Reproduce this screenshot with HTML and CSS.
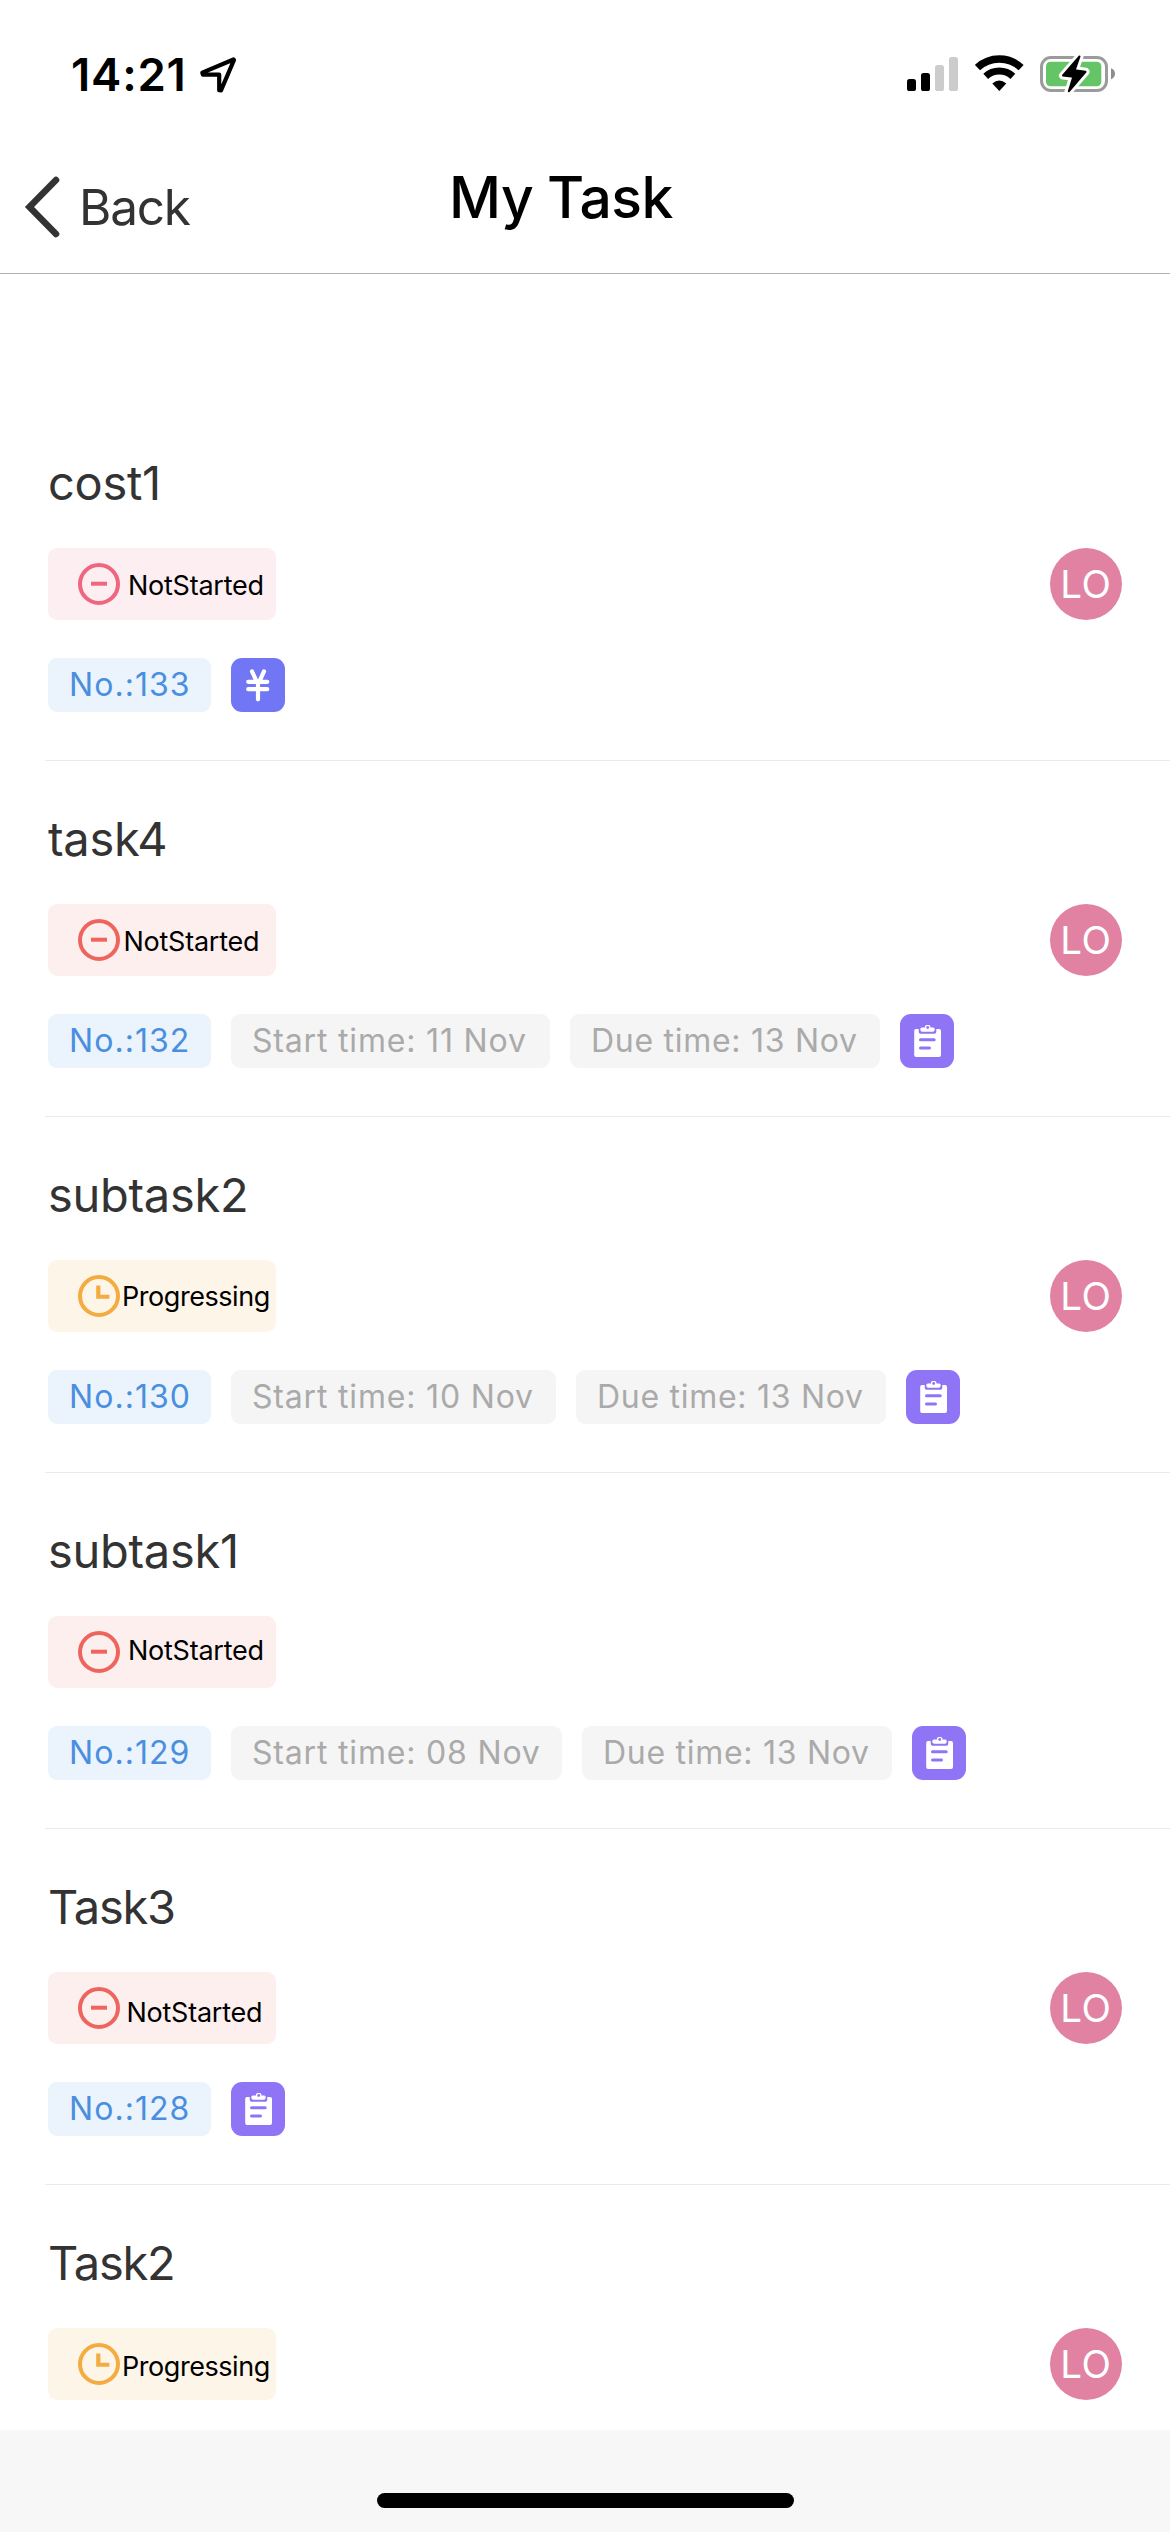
FILE: index.html
```html
<!DOCTYPE html>
<html lang="en">
<head>
<meta charset="utf-8">
<title>My Task</title>
<link rel="stylesheet" href="styles.css">
</head>
<body>
<svg class="defs" width="0" height="0" aria-hidden="true">
  <symbol id="minus" viewBox="0 0 42 42">
    <circle cx="21" cy="21" r="19" fill="none" stroke="currentColor" stroke-width="4"/>
    <rect x="13" y="18.7" width="16" height="4" fill="currentColor"/>
  </symbol>
  <symbol id="clock" viewBox="0 0 42 42">
    <circle cx="21" cy="21" r="19" fill="none" stroke="currentColor" stroke-width="4"/>
    <path d="M18.2 10.5h4.2v9.2h9v4H18.2z" fill="currentColor"/>
  </symbol>
  <symbol id="clipboard" viewBox="0 0 54 54">
    <path d="M16 15H18.7V17.2Q18.7 19.8 21.3 19.8H33.7Q36.3 19.8 36.3 17.2V15H39Q41 15 41 17V41Q41 43 39 43H16Q14.2 43 14.2 41V17Q14.2 15 16 15Z" fill="#fff"/>
    <path d="M22 13.4H25V12.6Q25 11 26.6 11H28.8Q30.4 11 30.4 12.6V13.4H33.2Q34.7 13.4 34.7 14.9V15.5Q34.7 17.8 32.7 17.8H22.4Q20.3 17.8 20.3 15.5V14.9Q20.3 13.4 22 13.4Z" fill="#fff"/>
    <circle cx="27.7" cy="13.5" r="1.4" fill="#8f75f6"/>
    <path d="M20.5 25.8H34.2M20.5 34H29.5" stroke="#8f75f6" stroke-width="3" stroke-linecap="round"/>
  </symbol>
  <symbol id="yen" viewBox="0 0 54 54">
    <path d="M21 13.4L25.8 23.8M33 13.4L28.2 23.8M27 24V41.3M17.2 23.8H36.3M17.2 31.2H36.3" fill="none" stroke="#fff" stroke-width="4.2" stroke-linecap="round"/>
  </symbol>
</svg>

<div class="screen">
  <div class="status-bar">
    <span class="time">14:21</span>
    <svg width="40" height="38" viewBox="0 0 40 38"><path d="M35.5 4.5L4.3 17.6L4.8 19.6H21.2V35.2L23 35.4L36 5Z" fill="none" stroke="#000" stroke-width="4.2" stroke-linejoin="round"/></svg>
    <div class="indicators">
      <svg width="52" height="34" viewBox="0 0 52 34">
        <rect x="0" y="22" width="9" height="12" rx="2.6"/><rect x="14" y="16" width="9" height="18" rx="2.6"/>
        <rect x="28" y="8" width="9" height="26" rx="2.6" fill="#ccc"/><rect x="42" y="0" width="9" height="34" rx="2.6" fill="#ccc"/>
      </svg>
      <svg width="49" height="38" viewBox="0 0 49 38">
        <path d="M2.5 12.6A32 32 0 0 1 46.1 12.6" fill="none" stroke="#000" stroke-width="7.4"/>
        <path d="M10.7 21.4A20 20 0 0 1 37.9 21.4" fill="none" stroke="#000" stroke-width="7"/>
        <path d="M17.3 28.6Q24.3 22.4 31.3 28.6L24.3 36Z"/>
      </svg>
      <svg width="76" height="42" viewBox="0 0 76 42">
        <rect x="1.5" y="4.5" width="65" height="33" rx="9.5" fill="none" stroke="#9b9b9b" stroke-width="3"/>
        <rect x="6" y="8.8" width="55.3" height="24.4" rx="4.5" fill="#65c466"/>
        <path d="M71 15.2Q75 17 75 20.8T71 26.4Z" fill="#8c8c8c"/>
        <path d="M39.5 3.5L23 22.5L33.3 23.8L28.5 38.5L45.5 18.8L34.7 17.2Z" fill="#fff" stroke="#fff" stroke-width="8" stroke-linejoin="round"/>
        <path d="M39.5 3.5L23 22.5L33.3 23.8L28.8 38.3L45.5 18.8L34.7 17.2Z" stroke="#000" stroke-width="2" stroke-linejoin="round"/>
      </svg>
    </div>
  </div>

  <div class="nav">
    <a class="back">
      <svg width="36" height="62" viewBox="0 0 36 62"><path d="M32 4L5.5 31L32 58" fill="none" stroke="#333" stroke-width="6.6" stroke-linecap="round"/></svg>
      <span>Back</span>
    </a>
    <h1 class="title">My Task</h1>
  </div>

  <div class="list">
    <div class="task">
      <div class="name">cost1</div>
      <div class="row">
        <div class="badge rose"><svg class="mark"><use href="#minus"/></svg><span class="label wide">NotStarted</span></div>
        <div class="avatar">LO</div>
      </div>
      <div class="tags"><span class="tag no">No.:133</span><svg class="kind cost"><use href="#yen"/></svg></div>
    </div>
    <div class="task">
      <div class="name">task4</div>
      <div class="row">
        <div class="badge red"><svg class="mark"><use href="#minus"/></svg><span class="label">NotStarted</span></div>
        <div class="avatar">LO</div>
      </div>
      <div class="tags"><span class="tag no">No.:132</span><span class="tag start narrow">Start time: 11 Nov</span><span class="tag due">Due time: 13 Nov</span><svg class="kind"><use href="#clipboard"/></svg></div>
    </div>
    <div class="task">
      <div class="name">subtask2</div>
      <div class="row">
        <div class="badge amber"><svg class="mark"><use href="#clock"/></svg><span class="label busy high">Progressing</span></div>
        <div class="avatar">LO</div>
      </div>
      <div class="tags"><span class="tag no">No.:130</span><span class="tag start">Start time: 10 Nov</span><span class="tag due">Due time: 13 Nov</span><svg class="kind"><use href="#clipboard"/></svg></div>
    </div>
    <div class="task">
      <div class="name">subtask1</div>
      <div class="row">
        <div class="badge red"><svg class="mark"><use href="#minus"/></svg><span class="label wide higher">NotStarted</span></div>
      </div>
      <div class="tags"><span class="tag no">No.:129</span><span class="tag start broad">Start time: 08 Nov</span><span class="tag due">Due time: 13 Nov</span><svg class="kind"><use href="#clipboard"/></svg></div>
    </div>
    <div class="task">
      <div class="name cap">Task3</div>
      <div class="row">
        <div class="badge red"><svg class="mark"><use href="#minus"/></svg><span class="label mid low">NotStarted</span></div>
        <div class="avatar">LO</div>
      </div>
      <div class="tags"><span class="tag no">No.:128</span><svg class="kind"><use href="#clipboard"/></svg></div>
    </div>
    <div class="task">
      <div class="name cap">Task2</div>
      <div class="row">
        <div class="badge amber"><svg class="mark"><use href="#clock"/></svg><span class="label busy">Progressing</span></div>
        <div class="avatar">LO</div>
      </div>
    </div>
  </div>

  <div class="home"><div class="home-bar"></div></div>
</div>
</body>
</html>
```
FILE: styles.css
```css
* { box-sizing: border-box; }
body { margin: 0; background: #fff; font-family: Inter, "Liberation Sans", sans-serif; color: #333; }
svg { display: block; flex: none; }
.defs { position: absolute; }

.screen { display: flex; flex-direction: column; width: 1170px; height: 2532px; overflow: hidden; }

.status-bar { display: flex; align-items: center; flex: none; height: 132px; padding: 16px 54px 0 71px; color: #000; }
.time { width: 127px; font-size: 45.5px; font-weight: 600; letter-spacing: 0.8px; white-space: nowrap; }
.indicators { display: flex; align-items: center; gap: 16px; margin-left: auto; }

.nav { display: grid; grid-template-columns: 449px auto; align-items: center; flex: none; height: 142px; padding-top: 9px; border-bottom: 1px solid #b2b2b2; }
.back { display: flex; align-items: center; gap: 19px; padding-left: 24px; font-size: 49.5px; letter-spacing: -1.2px; }
.title { margin: 0 0 20px; font-size: 57px; font-weight: 500; letter-spacing: -0.5px; word-spacing: -1px; color: #000; white-space: nowrap; }

.list { flex: 1; min-height: 0; padding-top: 131px; overflow: hidden; }
.task { height: 356px; margin-left: 45px; padding: 48px 48px 0 3px; border-bottom: 1px solid #ebebeb; }
.name { height: 60px; margin-bottom: 35px; font-size: 47px; line-height: 60px; letter-spacing: -0.3px; }
.name.cap { letter-spacing: -1.2px; }
.row { display: flex; align-items: center; justify-content: space-between; height: 72px; margin-bottom: 38px; }

.badge { display: flex; align-items: center; width: 228px; height: 72px; padding-left: 30px; border-radius: 9px; }
.rose { background: #fceef1; }
.red { background: #fdefee; }
.amber { background: #fef5e9; }
.mark { width: 42px; height: 42px; }
.rose .mark { color: #ee6680; }
.red .mark { color: #ee655e; }
.amber .mark { color: #f4ab3f; }
.label { margin: 2px 0 0 3.5px; font-size: 27px; letter-spacing: -0.25px; color: #000; white-space: nowrap; }
.label.wide { margin-left: 8px; }
.label.mid { margin-left: 6.5px; }
.label.busy { margin-left: 2px; margin-top: 4px; letter-spacing: -0.45px; }
.label.busy.high { margin-top: 1px; }
.label.higher { margin-top: -4px; }
.label.low { margin-top: 8px; }

.avatar { width: 72px; height: 72px; border-radius: 50%; background: #e182a3; color: #fff; font-size: 38.5px; line-height: 72px; text-align: center; letter-spacing: 0.6px; }

.tags { display: flex; gap: 20px; height: 54px; }
.tag { flex: none; height: 54px; padding-left: 21px; border-radius: 9px; font-size: 32px; line-height: 53px; white-space: nowrap; }
.no { width: 163px; background: #ebf4fc; color: #4a8ee0; letter-spacing: 1.05px; }
.start { width: 325px; background: #f5f5f5; color: #aaa; letter-spacing: 0.82px; }
.start.narrow { width: 319px; }
.start.broad { width: 331px; }
.due { width: 310px; background: #f5f5f5; color: #aaa; letter-spacing: 0.72px; }
.kind { width: 54px; height: 54px; border-radius: 11px; background: #8f75f6; }
.kind.cost { background: #7177f4; }

.home { display: flex; justify-content: center; flex: none; height: 102px; padding-top: 63px; background: #f7f7f7; }
.home-bar { width: 417px; height: 15px; border-radius: 8px; background: #000; }
```
